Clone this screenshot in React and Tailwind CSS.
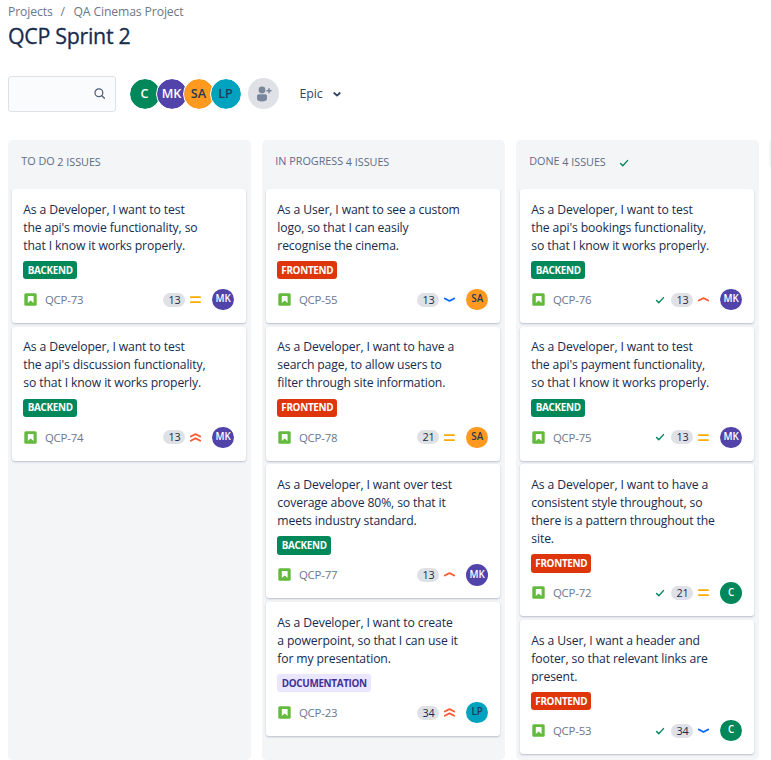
import React from "react";

const LABELS = {
  BACKEND: { box: "w-[54px] bg-[#00875a] text-white", text: "tracking-[-0.3px]" },
  FRONTEND: { box: "w-[60px] bg-[#de350b] text-white", text: "tracking-[-0.3px]" },
  DOCUMENTATION: { box: "w-[94px] bg-[#eae6ff] text-[#403294]", text: "tracking-[-0.33px]" },
};

const PEOPLE = {
  C: "bg-[#00875a] text-white",
  MK: "bg-[#5243aa] text-white",
  SA: "bg-[#ff991f] text-[#253858]",
  LP: "bg-[#00a3bf] text-[#253858]",
};

const COLUMNS = [
  {
    title: "TO DO",
    titleWidth: "w-[36px]",
    count: "2 ISSUES",
    cards: [
      { lines: ["As a Developer, I want to test", "the api's movie functionality, so", "that I know it works properly."], label: "BACKEND", id: "QCP-73", points: 13, priority: "medium", who: "MK" },
      { lines: ["As a Developer, I want to test", "the api's discussion functionality,", "so that I know it works properly."], label: "BACKEND", id: "QCP-74", points: 13, priority: "highest", who: "MK" },
    ],
  },
  {
    title: "IN PROGRESS",
    titleWidth: "w-[70.5px] tracking-[0px]",
    count: "4 ISSUES",
    cards: [
      { lines: ["As a User, I want to see a custom", "logo, so that I can easily", "recognise the cinema."], label: "FRONTEND", id: "QCP-55", points: 13, priority: "low", who: "SA" },
      { lines: ["As a Developer, I want to have a", "search page, to allow users to", "filter through site information."], label: "FRONTEND", id: "QCP-78", points: 21, priority: "medium", who: "SA" },
      { lines: ["As a Developer, I want over test", "coverage above 80%, so that it", "meets industry standard."], label: "BACKEND", id: "QCP-77", points: 13, priority: "high", who: "MK" },
      { lines: ["As a Developer, I want to create", "a powerpoint, so that I can use it", "for my presentation."], label: "DOCUMENTATION", id: "QCP-23", points: 34, priority: "highest", who: "LP" },
    ],
  },
  {
    title: "DONE",
    titleWidth: "w-[33px]",
    count: "4 ISSUES",
    done: true,
    cards: [
      { lines: ["As a Developer, I want to test", "the api's bookings functionality,", "so that I know it works properly."], label: "BACKEND", id: "QCP-76", points: 13, priority: "high", who: "MK" },
      { lines: ["As a Developer, I want to test", "the api's payment functionality,", "so that I know it works properly."], label: "BACKEND", id: "QCP-75", points: 13, priority: "medium", who: "MK" },
      { lines: ["As a Developer, I want to have a", "consistent style throughout, so", "there is a pattern throughout the", "site."], label: "FRONTEND", id: "QCP-72", points: 21, priority: "medium", who: "C" },
      { lines: ["As a User, I want a header and", "footer, so that relevant links are", "present."], label: "FRONTEND", id: "QCP-53", points: 34, priority: "low", who: "C" },
    ],
  },
];

function Check() {
  return (
    <svg className="h-[10px] w-[10px] shrink-0" viewBox="0 0 10 10" fill="none" stroke="#00875a" strokeWidth="1.4" strokeLinecap="round" strokeLinejoin="round">
      <path d="M1.6 5.4 3.8 7.7 8.5 2.6" />
    </svg>
  );
}

function Priority({ level }) {
  const paths = {
    medium: ["#ffab00", ["M1.7 4h9.4", "M1.7 9.1h9.4"]],
    low: ["#0065ff", ["M1.8 5.5 6.1 7.8q.4.2.8 0L11.2 5.5"]],
    high: ["#ff5630", ["M1.8 7.6 6.1 5.2q.4-.2.8 0L11.2 7.6"]],
    highest: ["#ff5630", ["M1.8 5.6 6.1 3.2q.4-.2.8 0L11.2 5.6", "M1.8 9.8 6.1 7.4q.4-.2.8 0L11.2 9.8"]],
  };
  const [color, lines] = paths[level];
  return (
    <svg className="h-[13px] w-[13px] shrink-0" viewBox="0 0 13 13" fill="none" stroke={color} strokeWidth="1.75" strokeLinecap="round">
      {lines.map((d) => <path key={d} d={d} />)}
    </svg>
  );
}

function Story() {
  return (
    <svg className="h-[13px] w-[13px] shrink-0" viewBox="0 0 13 13">
      <rect x="0.3" y="0.3" width="12.4" height="12.4" rx="1.5" fill="#63ba3c" />
      <path d="M4.3 3h4.8c.3 0 .5.2.5.5v6.6L6.7 7.4 3.8 10.1V3.5c0-.3.2-.5.5-.5z" fill="#fff" />
    </svg>
  );
}

function Card({ card, done }) {
  const label = LABELS[card.label];
  return (
    <article className="rounded-[3px] bg-white pt-[11.8px] pr-[12px] pb-[12.4px] pl-[11.3px] shadow-[0_1px_2px_rgba(9,30,66,0.25)]">
      <div className="text-[12.2px] leading-[18px] tracking-[-0.13px] text-[#172b4d]">
        {card.lines.map((line) => <p key={line} className="whitespace-nowrap">{line}</p>)}
      </div>
      <div className={`mt-[6.2px] flex h-[18.5px] items-center justify-center rounded-[3px] text-[9.9px] font-bold ${label.box}`}>
        <span className={label.text}>{card.label}</span>
      </div>
      <div className="mt-[9.2px] flex h-[22px] items-center">
        <div className="ml-[0.7px] flex"><Story /></div>
        <span className="ml-[8px] text-[11.4px] tracking-[-0.22px] text-[#6b778c]">{card.id}</span>
        <div className="ml-auto flex items-center">
          {done && <div className="mr-[6px] flex"><Check /></div>}
          <span className="flex h-[14px] w-[22px] items-center justify-center rounded-full bg-[#dfe1e6] text-[10.8px] tracking-[-0.2px] text-[#172b4d]">{card.points}</span>
          <span className="ml-[4px] flex"><Priority level={card.priority} /></span>
          <span className={`ml-[10px] flex size-[21.6px] items-center justify-center rounded-full text-[9.8px] font-semibold ${PEOPLE[card.who]}`}>{card.who}</span>
        </div>
      </div>
    </article>
  );
}

export default function App() {
  return (
    <div className="flex h-[760px] w-[771px] flex-col overflow-hidden bg-white pl-[8px] font-['Open_Sans','Noto_Sans',sans-serif]">
      <nav className="mt-[3px] flex h-[18px] items-center text-[12.2px] tracking-[-0.12px] text-[#6b778c]">
        <span>Projects</span>
        <span className="mr-[8.5px] ml-[8px]">/</span>
        <span>QA Cinemas Project</span>
      </nav>
      <h1 className="mt-[1px] h-[28px] text-[21.4px] leading-[28px] font-medium tracking-[-0.3px] text-[#172b4d] [-webkit-text-stroke:0.3px_#172b4d]">QCP Sprint 2</h1>

      <div className="mt-[26px] flex h-[36px] items-center">
        <div className="flex h-[36px] w-[108px] items-center justify-end rounded-[3px] border border-[#dfe1e6] bg-[#fafbfc] pr-[9px]">
          <svg className="-mt-[1px] size-[13px]" viewBox="0 0 13 13" fill="none" stroke="#505f79" strokeWidth="1.25" strokeLinecap="round">
            <circle cx="5.9" cy="5.7" r="3.9" />
            <path d="m8.9 8.8 2.5 2.5" />
          </svg>
        </div>
        <div className="-mt-[1px] ml-[12.5px] flex">
          {["C", "MK", "SA", "LP"].map((name) => (
            <span key={name} className={`mr-[-5px] flex size-[32px] items-center justify-center rounded-full border-[1.8px] border-white bg-clip-padding pt-[1px] text-[12.6px] font-semibold ${PEOPLE[name]}`}>{name}</span>
          ))}
        </div>
        <span className="-mt-[1px] ml-[11px] flex size-[31px] items-center justify-center rounded-full bg-[#dfe1e6]">
          <svg className="size-[22px]" viewBox="0 0 22 22" fill="#7a869a">
            <circle cx="10" cy="6.9" r="3.4" />
            <path d="M5 13.1c0-1 .8-1.8 1.8-1.8h6.4c1 0 1.8.8 1.8 1.8v2.7c0 1.8-2.2 2.7-5 2.7s-5-.9-5-2.7z" />
            <path d="M17 5.8v4M15 7.8h4" stroke="#7a869a" strokeWidth="1.5" strokeLinecap="round" />
          </svg>
        </span>
        <span className="ml-[21px] text-[12.4px] tracking-[-0.1px] text-[#344563]">Epic</span>
        <svg className="ml-[9px] size-[10px]" viewBox="0 0 10 10" fill="none" stroke="#344563" strokeWidth="1.8" strokeLinecap="round" strokeLinejoin="round">
          <path d="m2.2 4 2.8 2.6L7.8 4" />
        </svg>
      </div>

      <main className="mt-[28px] flex h-[620px] gap-[11px]">
        {COLUMNS.map((col) => (
          <section key={col.title} className="w-[243px] shrink-0 rounded-[5px] bg-[#f4f5f7] pr-[5px] pl-[4px]">
            <header className="flex h-[49px] items-center pb-[6px] pl-[9.3px] text-[10.8px] tracking-[-0.02px] text-[#5e6c84]">
              <span className={`whitespace-nowrap ${col.titleWidth}`}>{col.title}</span>
              <span className="mt-[1px]">{col.count}</span>
              {col.done && <span className="mt-[2px] ml-[13px] flex"><Check /></span>}
            </header>
            <div className="flex flex-col gap-[3.6px]">
              {col.cards.map((card) => <Card key={card.id} card={card} done={col.done} />)}
            </div>
          </section>
        ))}
        <div className="-ml-[1px] h-[27px] w-[27px] shrink-0 rounded-[3px] bg-[#f4f5f7]" />
      </main>
    </div>
  );
}
